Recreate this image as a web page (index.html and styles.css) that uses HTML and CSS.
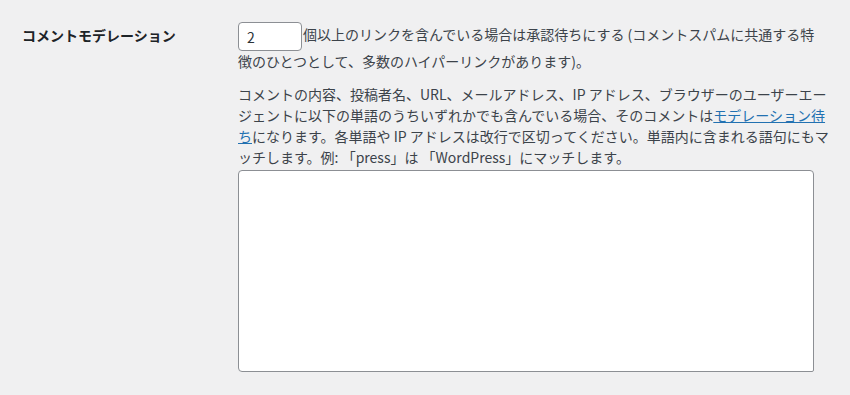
FILE: index.html
```html
<!DOCTYPE html>
<html lang="ja">
  <head>
    <meta charset="utf-8" />
    <title>ディスカッション設定</title>
    <link rel="stylesheet" href="styles.css">
  </head>

  <body>
    <div class="form-row">
      <div class="form-label">コメントモデレーション</div>
      <div class="form-field">
        <p class="field-line">
          <input
            type="text"
            name="comment_max_links"
            id="comment_max_links"
            class="small-text"
            value="2"
          /><label for="comment_max_links">個以上のリンクを含んでいる場合は承認待ちにする (コメントスパムに共通する特徴のひとつとして、多数のハイパーリンクがあります)。</label>
        </p>
        <p class="description">
          コメントの内容、投稿者名、URL、メールアドレス、IP アドレス、ブラウザーのユーザーエー<br>ジェントに以下の単語のうちいずれかでも含んでいる場合、そのコメントは<a href="#">モデレーション待<br>ち</a>になります。各単語や IP アドレスは改行で区切ってください。単語内に含まれる語句にもマ<br>ッチします。例: 「press」は 「WordPress」にマッチします。
        </p>
        <textarea name="moderation_keys" id="moderation_keys" class="large-text"></textarea>
      </div>
    </div>
  </body>
</html>
```

FILE: styles.css
```css
body {
  font-family: "Noto Sans CJK JP", "Noto Sans", sans-serif;
  background-color: #f0f0f1;
  color: #3c434a;
  font-size: 14px;
  margin: 0;
  line-break: normal;
  text-autospace: no-autospace;
}

.form-row {
  display: flex;
  padding-left: 22px;
}

.form-label {
  width: 216px;
  flex-shrink: 0;
  padding-top: 25px;
  line-height: 21px;
  font-weight: 700;
  color: #1d2327;
}

.form-field {
  width: 578px;
  padding-top: 22px;
}

.form-field p {
  margin: 0;
}

.field-line {
  line-height: 21px;
}

.small-text {
  width: 64px;
  height: 29px;
  box-sizing: border-box;
  padding: 0 8px;
  margin: 0 1px 0 0;
  border: 1px solid #8c8f94;
  border-radius: 4px;
  background: white;
  font-family: inherit;
  font-size: 14px;
  color: #2c3338;
  vertical-align: middle;
}

.form-field .description {
  line-height: 21px;
  margin-top: 12px;
  margin-bottom: 2px;
  white-space: nowrap;
}

.description a {
  color: #2271b1;
  text-decoration: underline;
}

.large-text {
  display: block;
  width: 576px;
  height: 202px;
  box-sizing: border-box;
  margin: 0;
  border: 1px solid #8c8f94;
  border-radius: 4px;
  border-bottom-right-radius: 2px;
  background: white;
  resize: none;
}
```
